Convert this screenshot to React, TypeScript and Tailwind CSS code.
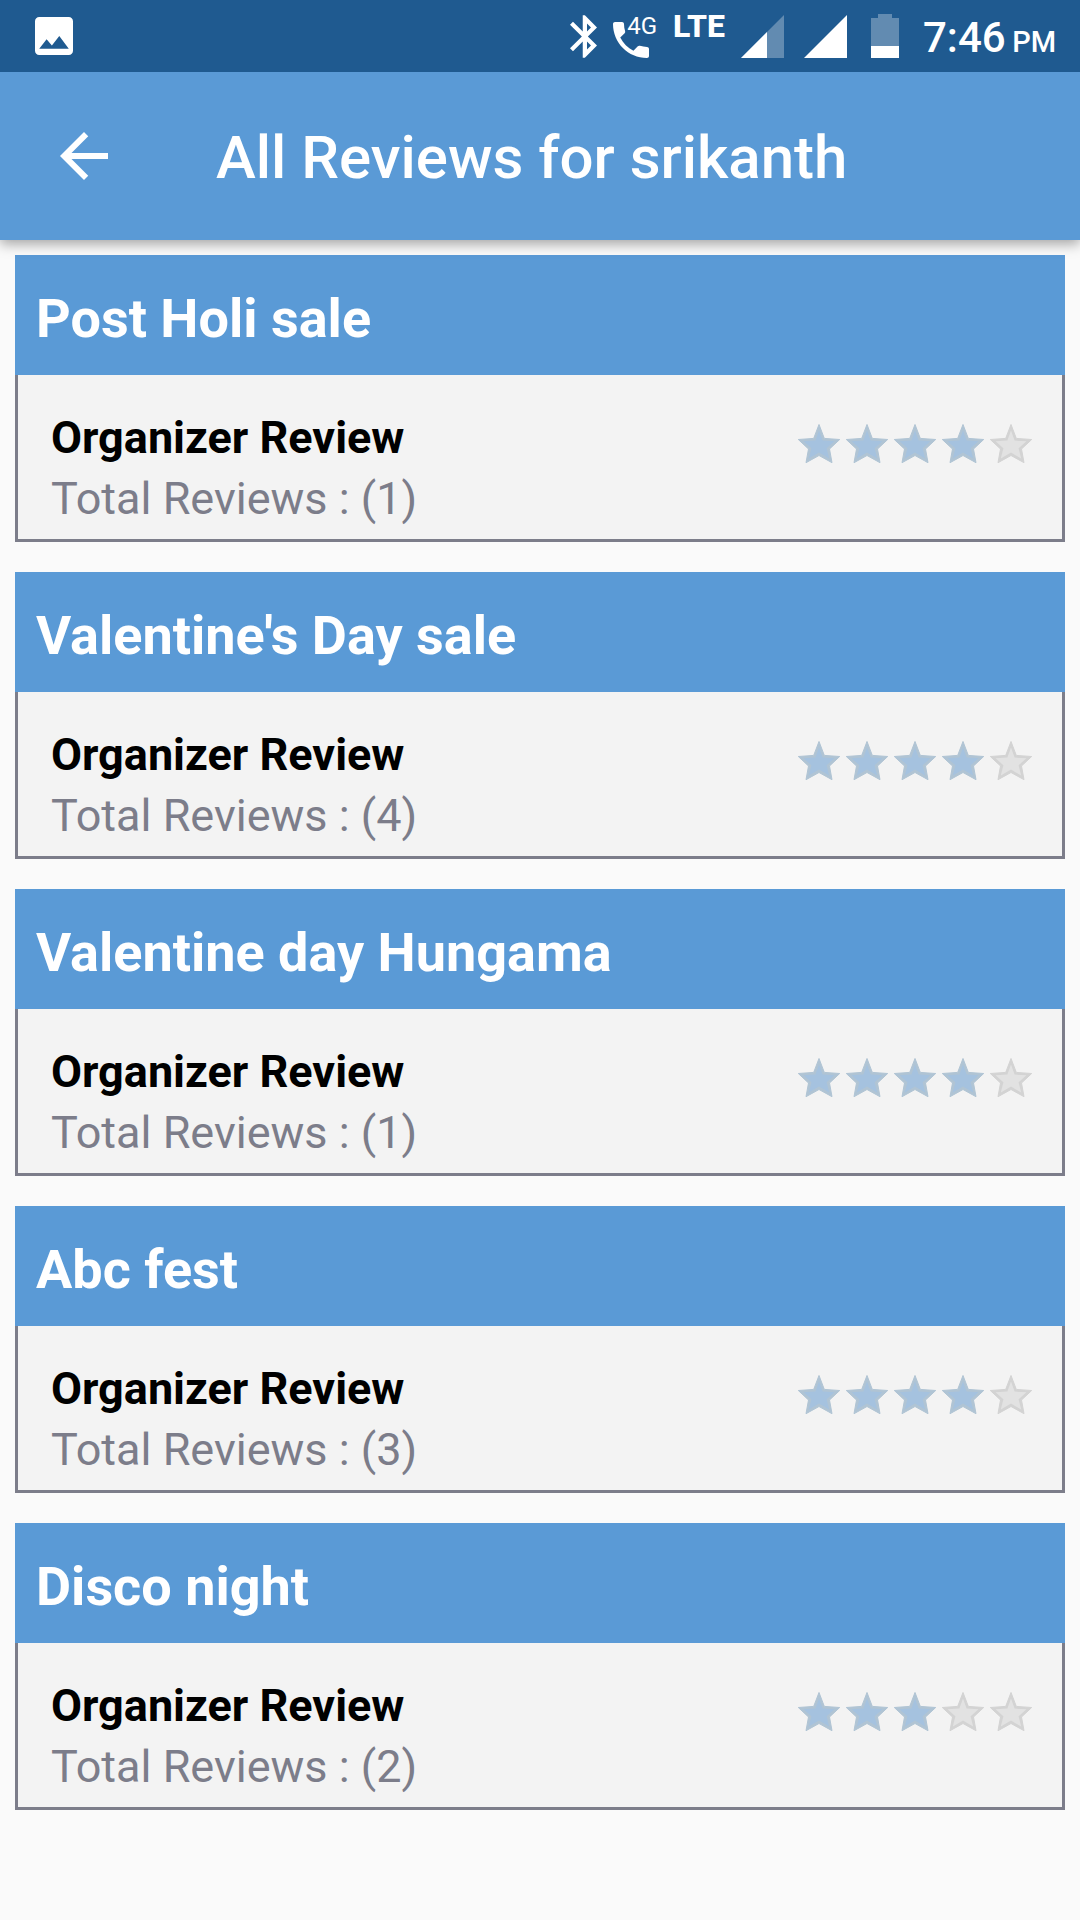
import React from "react";

type Review = { title: string; total: number; rating: number };

const reviews: Review[] = [
  { title: "Post Holi sale", total: 1, rating: 4 },
  { title: "Valentine's Day sale", total: 4, rating: 4 },
  { title: "Valentine day Hungama", total: 1, rating: 4 },
  { title: "Abc fest", total: 3, rating: 4 },
  { title: "Disco night", total: 2, rating: 3 },
];

function Star({ filled }: { filled: boolean }) {
  return (
    <svg viewBox="0 0 48 48" className="size-12" aria-hidden="true">
      <path
        d="M24 4.500L29.300 18.400L44.700 19.500L34.500 29L37 42.700L24 35.500L11 42.700L13.500 29L3.300 19.500L18.700 18.400Z"
        fill={filled ? "#b0c4d4" : "#d3d3d3"}
        stroke={filled ? "#b0c4d4" : "#d3d3d3"}
        strokeWidth="1"
        strokeLinejoin="round"
      />
      <path
        d="M24 10.500L27.600 20.600L39.500 21.300L31.600 28.200L34.200 38.600L24 32.600L13.800 38.600L16.400 28.200L8.500 21.300L20.400 20.600Z"
        fill={filled ? "#a5c2df" : "#e2e2e2"}
      />
    </svg>
  );
}

function Rating({ value }: { value: number }) {
  return (
    <div role="img" aria-label={`${value} out of 5 stars`} className="flex shrink-0">
      {[1, 2, 3, 4, 5].map((n) => (
        <Star key={n} filled={n <= value} />
      ))}
    </div>
  );
}

function ReviewCard({ review }: { review: Review }) {
  return (
    <li>
      <h2 className="bg-[#5a9ad6] pt-8 pr-4 pb-6 pl-[21px] text-[54px] leading-16 font-bold text-white">
        {review.title}
      </h2>
      <div className="flex items-start justify-between border-x-3 border-b-3 border-[#7c7d8a] bg-[#f3f3f3] pt-8 pr-[27px] pb-2.5 pl-[33px]">
        <div className="text-[45px] leading-[61px]">
          <h3 className="font-bold text-black">Organizer Review</h3>
          <p className="text-[#7c7d8a]">Total Reviews : ({review.total})</p>
        </div>
        <div className="pt-[13px]">
          <Rating value={review.rating} />
        </div>
      </div>
    </li>
  );
}

function Signal({ partial = false }: { partial?: boolean }) {
  return (
    <svg viewBox="0 0 43 43" className="size-[43px]" fill="#fff" aria-hidden="true">
      <path d="M0 43L43 0V43Z" fillOpacity={partial ? 0.3 : 1} />
      {partial && <path d="M0 43L26 17V43Z" />}
    </svg>
  );
}

function StatusBar() {
  return (
    <div className="relative z-10 flex h-18 items-center justify-between bg-[#1f5a90] pr-6 pl-[35px] text-white">
      <svg viewBox="3 3 18 18" className="size-[38px]" fill="#fff" aria-hidden="true">
        <path d="M21 19V5c0-1.100-.9-2-2-2H5c-1.100 0-2 .9-2 2v14c0 1.100.9 2 2 2h14c1.100 0 2-.9 2-2zM8.500 13.500l2.500 3.010L14.500 12l4.500 6H5l3.500-4.500z" />
      </svg>
      <div className="flex items-center">
        <svg viewBox="5 2 12.710 20" className="mr-4 h-[43px] w-[27px]" fill="#fff" aria-hidden="true">
          <path d="M17.710 7.710L12 2h-1v7.590L6.410 5 5 6.410 10.590 12 5 17.590 6.410 19 11 14.410V22h1l5.710-5.710-4.300-4.290 4.300-4.290zM13 5.830l1.880 1.880L13 9.590V5.830zm1.880 10.460L13 18.170v-3.760l1.880 1.880z" />
        </svg>
        <div className="relative mr-4 h-11 w-11">
          <svg viewBox="3 3 18 18" className="absolute bottom-0 left-0 size-9" fill="#fff" aria-hidden="true">
            <path d="M20 15.500c-1.250 0-2.450-.2-3.570-.57-.35-.11-.74-.03-1.020.24l-2.200 2.200c-2.830-1.440-5.150-3.750-6.590-6.590l2.200-2.210c.28-.26.36-.65.25-1C8.700 6.450 8.500 5.250 8.500 4c0-.55-.45-1-1-1H4c-.55 0-1 .45-1 1 0 9.390 7.610 17 17 17 .55 0 1-.45 1-1v-3.500c0-.55-.45-1-1-1z" />
          </svg>
          <span className="absolute top-0 right-0 text-2xl leading-6">4G</span>
        </div>
        <span className="mr-4 self-start pt-1 text-[32px] leading-8 font-extrabold">LTE</span>
        <div className="mr-6 flex gap-5">
          <Signal partial />
          <Signal />
        </div>
        <svg viewBox="0 0 28 44" className="mr-6 h-11 w-7" fill="#fff" aria-hidden="true">
          <path d="M7 0H21V4H28V32H0V4H7Z" fillOpacity="0.3" />
          <path d="M0 32H28V44H0Z" />
        </svg>
        <p className="pt-2 text-[42px] leading-12 font-medium">
          7:46 <span className="-ml-1 text-[29px]">PM</span>
        </p>
      </div>
    </div>
  );
}

export default function App() {
  return (
    <div className="min-h-screen bg-[#fafafa] font-[Roboto,sans-serif]">
      <StatusBar />
      <header className="relative flex h-42 items-center bg-[#5a9ad6] pl-12 text-white shadow-[0_4px_12px_rgba(0,0,0,0.35)]">
        <button type="button" aria-label="Back" className="flex size-18 items-center justify-center">
          <svg viewBox="4 4 16 16" className="size-12" fill="#fff" aria-hidden="true">
            <path d="M20 11H7.830l5.590-5.590L12 4l-8 8 8 8 1.410-1.410L7.830 13H20v-2z" />
          </svg>
        </button>
        <h1 className="ml-24 pt-1 text-[60px] leading-18 font-medium">All Reviews for srikanth</h1>
      </header>
      <main className="px-[15px] py-[15px]">
        <ul className="flex flex-col gap-[30px]">
          {reviews.map((r) => (
            <ReviewCard key={r.title} review={r} />
          ))}
        </ul>
      </main>
    </div>
  );
}
